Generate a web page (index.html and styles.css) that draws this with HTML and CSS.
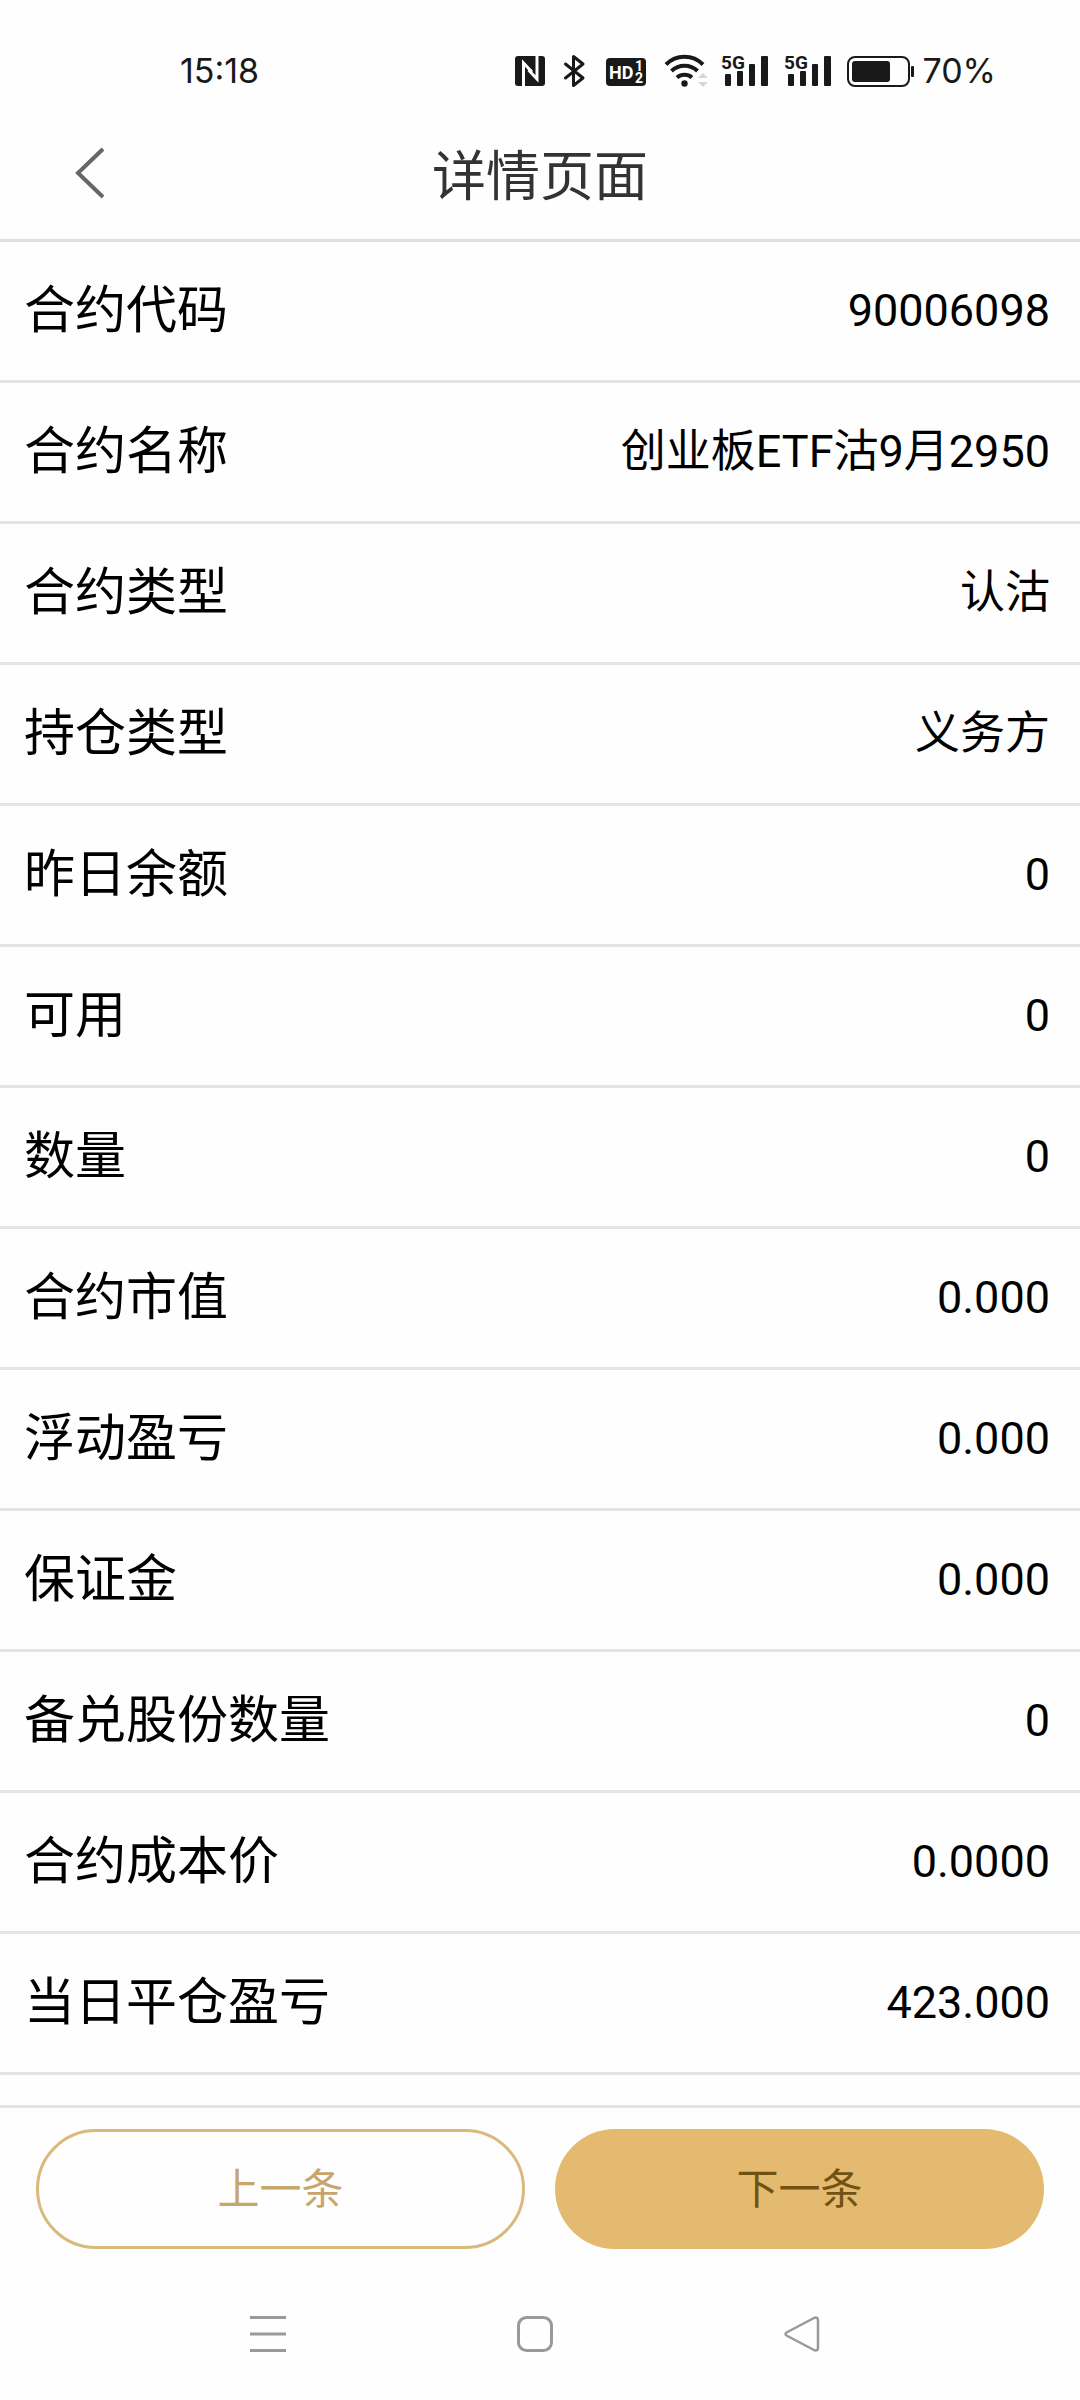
FILE: index.html
```html
<!DOCTYPE html>
<html lang="zh-CN">
	<head>
		<meta charset="UTF-8">
		<meta name="viewport" content="width=device-width, initial-scale=1.0">
		<title>详情页面</title>
		<link rel="stylesheet" href="styles.css">
	</head>
	<body>
		<div class="status-bar">
			<span class="time">15:18</span>
			<div class="status-icons">
				<!-- NFC -->
				<svg width="30" height="34" viewBox="0 0 30 34">
					<rect y="2" width="30" height="30" rx="3" fill="#191919" />
					<path d="M8.500 32V9l8.500 9M22 2v23l-8.500-9" fill="none" stroke="#fff" stroke-width="3" />
				</svg>
				<!-- Bluetooth -->
				<svg width="27" height="34" viewBox="0 0 27 34">
					<path d="M4.500 10L22 24 12.500 31.500V2.500L22 10 4.500 24" fill="none" stroke="#191919" stroke-width="3" stroke-linejoin="round" stroke-linecap="round" />
				</svg>
				<!-- HD -->
				<svg width="43" height="34" viewBox="0 0 43 34">
					<rect x="2" y="4" width="40" height="28" rx="4" fill="#191919" />
					<text class="hd-text" x="5" y="25">HD</text>
					<text class="hd-num" x="31" y="17">1</text>
					<text class="hd-num" x="31" y="29">2</text>
				</svg>
				<!-- Wi-Fi -->
				<svg width="42" height="34" viewBox="0 0 42 34">
					<g fill="none" stroke="#191919" stroke-width="4">
						<path d="M3 10.500a26 26 0 0 1 37 0" />
						<path d="M8.500 17a19 19 0 0 1 26 0" />
						<path d="M14 23.500a11.500 11.500 0 0 1 15 0" />
					</g>
					<circle cx="21.500" cy="29.500" r="3.200" fill="#191919" />
					<path d="M35 24l5-5 5 5zM35 28l5 5 5-5z" fill="#d6d6d6" />
				</svg>
				<!-- SIM 1 -->
				<svg width="47" height="34" viewBox="0 0 47 34">
					<g fill="#191919">
						<rect x="4" y="20" width="6" height="12" rx="1" />
						<rect x="16" y="17" width="6" height="15" rx="1" />
						<rect x="28" y="10" width="6" height="22" rx="1" />
						<rect x="40" y="2" width="7" height="30" rx="1" />
					</g>
					<text class="net-text" x="0" y="15">5G</text>
				</svg>
				<!-- SIM 2 -->
				<svg width="47" height="34" viewBox="0 0 47 34">
					<g fill="#191919">
						<rect x="4" y="20" width="6" height="12" rx="1" />
						<rect x="16" y="17" width="6" height="15" rx="1" />
						<rect x="28" y="10" width="6" height="22" rx="1" />
						<rect x="40" y="2" width="7" height="30" rx="1" />
					</g>
					<text class="net-text" x="0" y="15">5G</text>
				</svg>
				<div class="battery">
					<svg width="67" height="34" viewBox="0 0 67 34">
						<rect x="1" y="3" width="61" height="29" rx="7" fill="none" stroke="#191919" stroke-width="2" />
						<rect x="5" y="7" width="38" height="21" rx="3" fill="#191919" />
						<rect x="64" y="12" width="3" height="11" rx="1" fill="#191919" />
					</svg>
					<span>70%</span>
				</div>
			</div>
		</div>

		<header class="header">
			<button class="back" type="button" aria-label="返回">
				<svg width="30" height="52" viewBox="0 0 30 52">
					<path d="M28 2L3 26l25 24" fill="none" stroke="#666" stroke-width="4" />
				</svg>
			</button>
			<h1>详情页面</h1>
		</header>

		<main class="content">
			<dl class="list">
				<div class="row"><dt>合约代码</dt><dd>90006098</dd></div>
				<div class="row"><dt>合约名称</dt><dd>创业板ETF沽9月2950</dd></div>
				<div class="row"><dt>合约类型</dt><dd>认沽</dd></div>
				<div class="row"><dt>持仓类型</dt><dd>义务方</dd></div>
				<div class="row"><dt>昨日余额</dt><dd>0</dd></div>
				<div class="row"><dt>可用</dt><dd>0</dd></div>
				<div class="row"><dt>数量</dt><dd>0</dd></div>
				<div class="row"><dt>合约市值</dt><dd>0.000</dd></div>
				<div class="row"><dt>浮动盈亏</dt><dd>0.000</dd></div>
				<div class="row"><dt>保证金</dt><dd>0.000</dd></div>
				<div class="row"><dt>备兑股份数量</dt><dd>0</dd></div>
				<div class="row"><dt>合约成本价</dt><dd>0.0000</dd></div>
				<div class="row"><dt>当日平仓盈亏</dt><dd>423.000</dd></div>
			</dl>
		</main>

		<footer class="footer">
			<button class="btn btn-prev" type="button">上一条</button>
			<button class="btn btn-next" type="button">下一条</button>
		</footer>

		<nav class="nav-bar">
			<button type="button" aria-label="菜单">
				<svg width="36" height="36" viewBox="0 0 36 36">
					<path d="M0 1.500h36M0 18h36M0 34.500h36" stroke="#999" stroke-width="3" />
				</svg>
			</button>
			<button type="button" aria-label="主页">
				<svg width="36" height="36" viewBox="0 0 36 36">
					<rect x="1.500" y="1.500" width="33" height="33" rx="8" fill="none" stroke="#999" stroke-width="3" />
				</svg>
			</button>
			<button type="button" aria-label="返回">
				<svg width="36" height="36" viewBox="0 0 36 36">
					<path d="M2.500 16.500L30 2q4-1.500 4 2.500v27q0 4-4 2.500L2.500 19.500q-2-1.500 0-3z" fill="none" stroke="#999" stroke-width="2.500" stroke-linejoin="round" />
				</svg>
			</button>
		</nav>
	</body>
</html>
```

FILE: styles.css
```css
* {
	box-sizing: border-box;
}
body {
	margin: 0;
	min-height: 100vh;
	display: flex;
	flex-direction: column;
	background-color: #fefefe;
	color: #000;
	font-family: Roboto, "Noto Sans CJK SC", sans-serif;
}
button {
	border: none;
	padding: 0;
	background: none;
	font-family: inherit;
	cursor: pointer;
}
svg {
	display: block;
	overflow: visible;
}

/* status bar */
.status-bar {
	display: flex;
	justify-content: space-between;
	align-items: center;
	height: 106px;
	padding: 36px 84px 0 180px;
	font-family: Inter, sans-serif;
	font-size: 34px;
	line-height: 44px;
	color: #191919;
}
.status-icons {
	display: flex;
	align-items: center;
	gap: 16px;
}
.battery {
	display: flex;
	align-items: center;
	gap: 8px;
}
.hd-text {
	font: bold 18px Roboto, sans-serif;
	fill: #fff;
}
.hd-num {
	font: bold 14px Roboto, sans-serif;
	fill: #fff;
}
.net-text {
	font: bold 19px Roboto, sans-serif;
	fill: #191919;
	stroke: #fefefe;
	stroke-width: 2px;
	paint-order: stroke;
}

/* header */
.header {
	display: grid;
	grid-template-columns: 180px 1fr 180px;
	align-items: center;
	height: 136px;
	border-bottom: 3px solid #e0e0e0;
}
.back {
	display: flex;
	align-items: center;
	height: 100px;
	padding-left: 75px;
}
.header h1 {
	margin: 0;
	padding-top: 10px;
	font-size: 54px;
	line-height: 72px;
	font-weight: normal;
	text-align: center;
	color: #333;
}

/* detail list */
.content {
	flex: 1;
}
.list {
	margin: 0;
}
.row {
	display: flex;
	justify-content: space-between;
	align-items: center;
	height: 141px;
	padding: 0 30px 0 24px;
	border-bottom: 3px solid #e4e4e4;
}
.row dt {
	font-size: 51px;
	line-height: 72px;
}
.row dd {
	margin: 0;
	font-size: 45px;
	line-height: 72px;
	text-align: right;
}

/* bottom buttons */
.footer {
	display: grid;
	grid-template-columns: 1fr 1fr;
	gap: 30px;
	padding: 21px 36px 19px;
	border-top: 3px solid #e4e4e4;
}
.btn {
	height: 120px;
	padding-bottom: 8px;
	border-radius: 60px;
	font-size: 42px;
}
.btn-prev {
	border: 3px solid #dab97d;
	color: #c8a66b;
}
.btn-next {
	background-color: #e3ba6f;
	color: #705313;
}

/* system navigation */
.nav-bar {
	display: grid;
	grid-template-columns: repeat(3, 1fr);
	height: 132px;
	padding: 0 144px 0 134px;
}
.nav-bar button {
	display: flex;
	align-items: center;
	justify-content: center;
}
```
